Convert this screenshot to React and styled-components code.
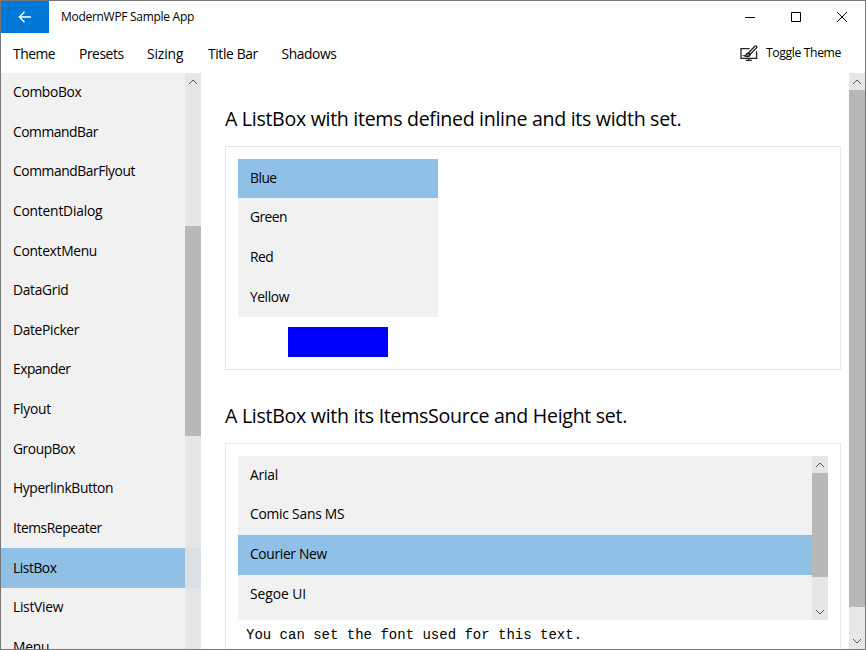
import React from "react";
import styled, { createGlobalStyle } from "styled-components";

const GlobalStyle = createGlobalStyle`
  * { box-sizing: border-box; }
  body { margin: 0; background: #fff; }
`;

const Window = styled.div`
  width: 866px;
  height: 650px;
  display: grid;
  grid-template-rows: 32px 40px minmax(0, 1fr);
  border: 1px solid #777;
  background: #fff;
  color: #000;
  font-family: "Open Sans", "Noto Sans", sans-serif;
  font-size: 13.8px;
  overflow: hidden;
`;

const TitleBar = styled.header`
  display: flex;
`;

const BackButton = styled.button`
  width: 48px;
  height: 32px;
  padding: 0;
  border: 0;
  display: grid;
  place-items: center;
  background: #0078d7;
`;

const Title = styled.div`
  flex: 1;
  padding-left: 12px;
  font-size: 12px;
  letter-spacing: -0.29px;
  line-height: 31px;
`;

const CaptionButton = styled.button`
  width: 46px;
  height: 32px;
  padding: 0;
  border: 0;
  display: grid;
  place-items: center;
  background: transparent;
`;

const MenuBar = styled.nav`
  display: flex;
  padding: 0 24px 0 12px;
  line-height: 42px;
  white-space: nowrap;
`;

const MenuItem = styled.div`
  width: ${(p) => p.$width}px;
  letter-spacing: ${(p) => p.$spacing || 0}px;
`;

const ToggleTheme = styled.div`
  margin-left: auto;
  display: flex;
  align-items: center;
  gap: 8px;
  font-size: 12.2px;
  letter-spacing: -0.37px;
  line-height: 40px;
  height: 40px;
`;

const Body = styled.div`
  display: grid;
  grid-template-columns: 200px 1fr 16px;
  min-height: 0;
`;

const ScrollArea = styled.div`
  display: grid;
  grid-template-columns: minmax(0, 1fr);
  height: ${(p) => (p.$height ? `${p.$height}px` : "auto")};
  background: #f1f1f1;
  overflow: hidden;

  & > * { grid-area: 1 / 1; }
`;

const List = styled.div`
  width: ${(p) => (p.$width ? `${p.$width}px` : "auto")};
  margin-top: ${(p) => p.$offset || 0}px;
  line-height: 37px;
  background: #f1f1f1;
`;

const ListItem = styled.div`
  height: 39.62px;
  padding: ${(p) => p.$inset || 0}px 0 0 12px;
  white-space: nowrap;
  letter-spacing: ${(p) => p.$spacing || 0}px;
  background: ${(p) => (p.$selected ? "#91c0e7" : "transparent")};
`;

const Track = styled.div`
  justify-self: end;
  width: 16px;
  height: 100%;
  display: grid;
  grid-template-rows: ${(p) => p.$rows};
  background: rgba(228, 228, 228, 0.88);
`;

const Thumb = styled.div`
  grid-row: 3;
  background: rgba(180, 180, 180, 0.92);
`;

const Arrow = styled.div`
  grid-row: ${(p) => p.$row};
  display: grid;
  place-items: center;
`;

const Page = styled.main`
  padding: 32px 8px 0 24px;
  min-height: 0;
  overflow: hidden;
`;

const Heading = styled.h2`
  margin: 0;
  height: 41px;
  font-size: 19.6px;
  font-weight: 400;
  line-height: 28px;
  white-space: nowrap;
  letter-spacing: ${(p) => p.$spacing}px;
`;

const Card = styled.section`
  height: ${(p) => p.$height}px;
  margin-bottom: 32px;
  padding: 12px;
  border: 1px solid #e6e6e6;
`;

const Swatch = styled.div`
  width: 100px;
  height: 30px;
  margin: 9.8px 0 0 50px;
  background: #00f;
`;

const Sample = styled.p`
  margin: 7px 0 0 8px;
  font: 14px/17px "Liberation Mono", monospace;
  white-space: nowrap;
`;

const Chevron = ({ down }) => (
  <svg width="10" height="6" viewBox="0 0 10 6" fill="none" stroke="#555" strokeWidth="1">
    <path d={down ? "M1 1l4 4 4-4" : "M1 5l4-4 4 4"} />
  </svg>
);

const ScrollBar = ({ before, thumb }) => (
  <Track $rows={`17px ${before}px ${thumb}px 1fr 17px`}>
    <Arrow $row={1}><Chevron /></Arrow>
    <Thumb />
    <Arrow $row={5}><Chevron down /></Arrow>
  </Track>
);

const controls = [
  ["ComboBox", -0.3], ["CommandBar", -0.45], ["CommandBarFlyout", -0.41], ["ContentDialog", -0.2],
  ["ContextMenu", -0.3], ["DataGrid", -0.3], ["DatePicker", -0.33], ["Expander", -0.5],
  ["Flyout", -0.2], ["GroupBox", -0.42], ["HyperlinkButton", -0.36], ["ItemsRepeater", -0.42],
  ["ListBox", -0.45], ["ListView", -0.28], ["Menu", -0.2],
];
const menus = [
  ["Theme", 66, -0.45], ["Presets", 68, -0.42], ["Sizing", 61, -0.1], ["Title Bar", 73.5, -0.36], ["Shadows", 60, -0.4],
];
const colors = [["Blue", -0.5], ["Green", -0.55], ["Red", -0.5], ["Yellow", -0.42]];
const fonts = [["Arial", -0.2], ["Comic Sans MS", -0.22], ["Courier New", -0.33], ["Segoe UI", -0.02]];

const Items = ({ items, selected, inset }) =>
  items.map(([label, spacing]) => (
    <ListItem key={label} $spacing={spacing} $inset={inset} $selected={label === selected}>{label}</ListItem>
  ));

export default function App() {
  return (
    <Window>
      <GlobalStyle />
      <TitleBar>
        <BackButton aria-label="Back">
          <svg width="14" height="12" viewBox="0 0 14 12" fill="none" stroke="#fff" strokeWidth="1.4">
            <path d="M13 6H1.500M6.500 .8L1.300 6l5.200 5.200" />
          </svg>
        </BackButton>
        <Title>ModernWPF Sample App</Title>
        <CaptionButton aria-label="Minimize">
          <svg width="10" height="10" stroke="#000"><path d="M0 5.500h10" /></svg>
        </CaptionButton>
        <CaptionButton aria-label="Maximize">
          <svg width="10" height="10" stroke="#000" fill="none"><path d="M.5.5h9v9h-9z" /></svg>
        </CaptionButton>
        <CaptionButton aria-label="Close">
          <svg width="10" height="10" stroke="#000"><path d="M0 0l10 10M10 0L0 10" /></svg>
        </CaptionButton>
      </TitleBar>
      <MenuBar>
        {menus.map(([label, width, spacing]) => (
          <MenuItem key={label} $width={width} $spacing={spacing}>{label}</MenuItem>
        ))}
        <ToggleTheme>
          <svg width="18" height="16" viewBox="0 0 18 16" fill="none" stroke="#222" strokeWidth="1.3">
            <path d="M9.500 3.700H1v9.600h15.600V6.200M8.800 13.300v2M5.800 15.300h6" />
            <path d="M8.600 7.800L14.800 1.300q1-.8 1.700-.1.700.8-.1 1.700L10.300 9.300z" />
            <path fill="#777" d="M4 10.800q1.600-.1 2.200-1.300.7-1.400 2-1.200 1.600.3 1.700 1.400.1 1.700-2.100 1.800Q5.500 11.700 4 10.800z" />
          </svg>
          <span>Toggle Theme</span>
        </ToggleTheme>
      </MenuBar>
      <Body>
        <ScrollArea>
          <List><Items items={controls} selected="ListBox" inset={0.2} /></List>
          <ScrollBar before={136} thumb={210} />
        </ScrollArea>
        <Page>
          <Heading $spacing={-0.31}>A ListBox with items defined inline and its width set.</Heading>
          <Card $height={224}>
            <List $width={200} $offset={-0.3}><Items items={colors} selected="Blue" /></List>
            <Swatch />
          </Card>
          <Heading $spacing={-0.3}>A ListBox with its ItemsSource and Height set.</Heading>
          <Card $height={260}>
            <ScrollArea $height={164}>
              <List $offset={-0.3}><Items items={fonts} selected="Courier New" /></List>
              <ScrollBar before={0} thumb={104} />
            </ScrollArea>
            <Sample>You can set the font used for this text.</Sample>
          </Card>
        </Page>
        <ScrollBar before={0} thumb={517} />
      </Body>
    </Window>
  );
}
